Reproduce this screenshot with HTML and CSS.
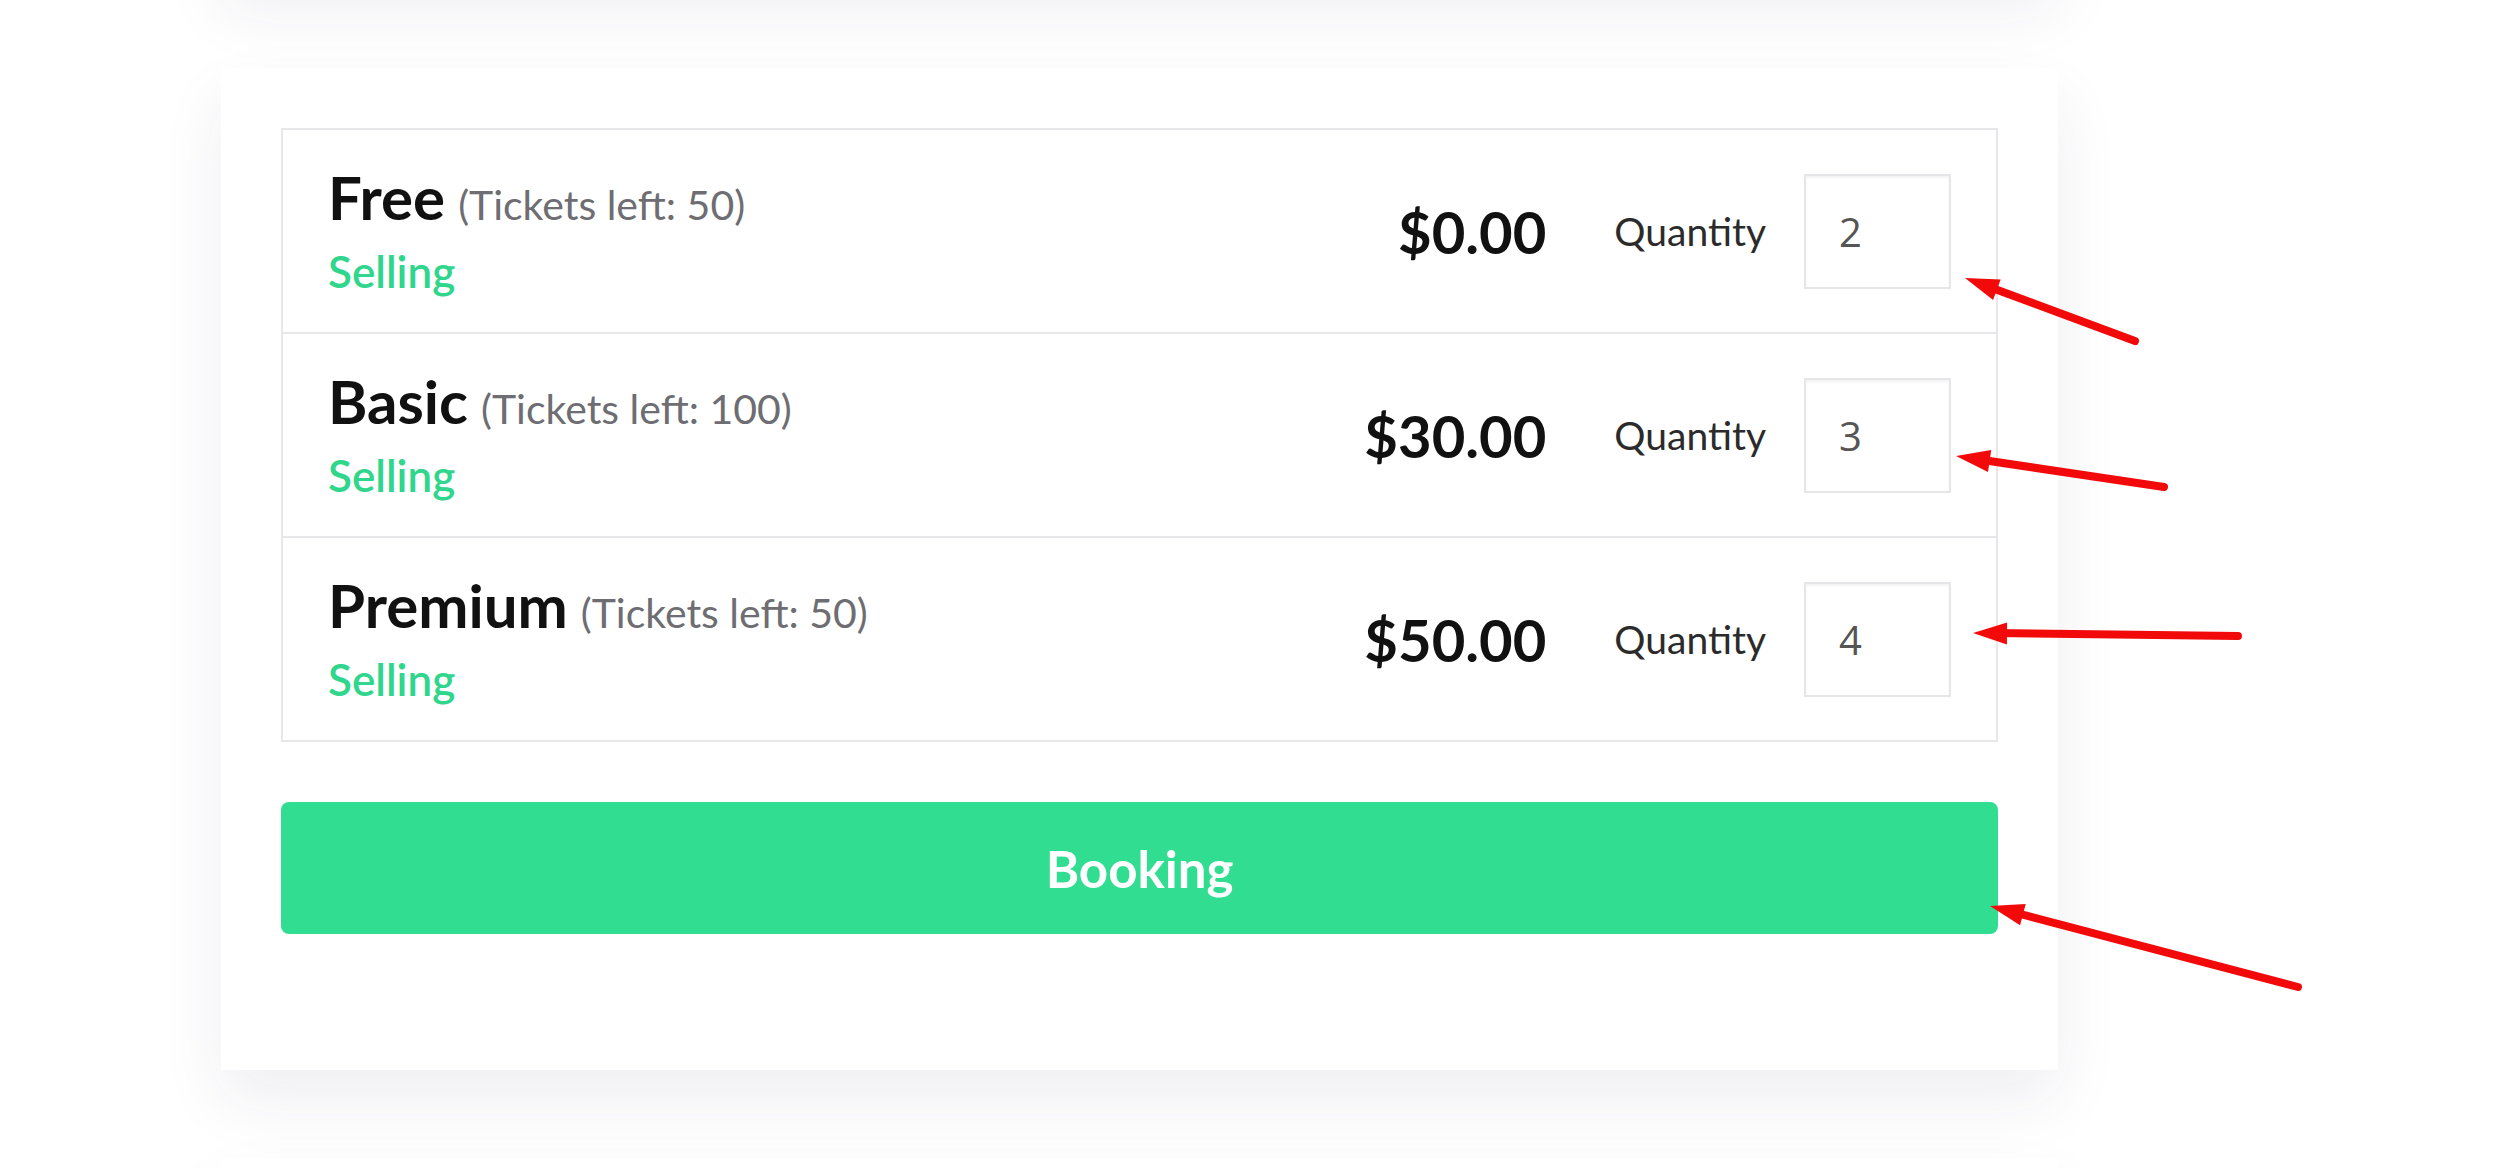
FILE: index.html
```html
<!DOCTYPE html>
<html lang="en">
<head>
<meta charset="utf-8">
<title>Tickets</title>
<link rel="stylesheet" href="styles.css">
</head>
<body>
<div class="page">
  <div class="card card-prev"></div>
  <div class="card booking-card">
    <div class="tickets">
      <div class="ticket-row">
        <div class="ticket-info">
          <div class="ticket-title"><span class="ticket-name">Free</span><span class="ticket-left">(Tickets left: 50)</span></div>
          <div class="ticket-status">Selling</div>
        </div>
        <div class="ticket-price">$0.00</div>
        <label class="qty-label">Quantity</label>
        <input class="qty-input" type="text" value="2">
      </div>
      <div class="ticket-row">
        <div class="ticket-info">
          <div class="ticket-title"><span class="ticket-name">Basic</span><span class="ticket-left">(Tickets left: 100)</span></div>
          <div class="ticket-status">Selling</div>
        </div>
        <div class="ticket-price">$30.00</div>
        <label class="qty-label">Quantity</label>
        <input class="qty-input" type="text" value="3">
      </div>
      <div class="ticket-row">
        <div class="ticket-info">
          <div class="ticket-title"><span class="ticket-name">Premium</span><span class="ticket-left">(Tickets left: 50)</span></div>
          <div class="ticket-status">Selling</div>
        </div>
        <div class="ticket-price">$50.00</div>
        <label class="qty-label">Quantity</label>
        <input class="qty-input" type="text" value="4">
      </div>
    </div>
    <button class="booking-btn" type="button">Booking</button>
  </div>
  <div class="card card-next"></div>
</div>

<svg class="annotations" width="2500" height="1168" viewBox="0 0 2500 1168" xmlns="http://www.w3.org/2000/svg">
  <g stroke="#f20a0a" stroke-width="8" stroke-linecap="round" fill="none">
    <line x1="1984" y1="285" x2="2135" y2="341"/>
    <line x1="1976" y1="459" x2="2164" y2="487"/>
    <line x1="1993" y1="633" x2="2238" y2="636"/>
    <line x1="2009" y1="911" x2="2298" y2="987"/>
  </g>
  <g fill="#f20a0a">
    <polygon points="1965,278 2000.7,279.5 1993.1,300.1"/>
    <polygon points="1956,456 1991.2,450.1 1988,471.9"/>
    <polygon points="1973,633 2007.1,622.4 2006.9,644.4"/>
    <polygon points="1990,906 2025.7,904 2020.1,925.2"/>
  </g>
</svg>
</body>
</html>
```

FILE: styles.css
```css
html, body {
  margin: 0;
  padding: 0;
}

body {
  width: 2500px;
  height: 1168px;
  overflow: hidden;
  position: relative;
  background: #ffffff;
  font-family: Lato, "Open Sans", "Liberation Sans", sans-serif;
  color: #111111;
}

.page {
  width: 1837px;
  margin: -220px 0 0 221px;
  display: flex;
  flex-direction: column;
  gap: 88px;
}

.card {
  background: #ffffff;
  box-shadow: 0 30px 60px rgba(40, 40, 90, 0.075);
}

.card-prev {
  height: 200px;
}

.card-next {
  height: 300px;
}

.booking-card {
  padding: 60px 60px 136px 60px;
  display: flex;
  flex-direction: column;
  gap: 60px;
}

.tickets {
  border: 2px solid #e7e7ea;
  display: flex;
  flex-direction: column;
}

.ticket-row {
  height: 202px;
  display: flex;
  align-items: center;
  padding: 0 45px 0 45px;
}

.ticket-row + .ticket-row {
  border-top: 2px solid #e7e7ea;
}

.ticket-info {
  flex: 1;
  display: flex;
  flex-direction: column;
  gap: 8px;
}

.ticket-title {
  display: flex;
  align-items: baseline;
  gap: 13px;
  line-height: 64px;
  white-space: nowrap;
}

.ticket-name {
  font-size: 60px;
  font-weight: 700;
  color: #111111;
}

.ticket-left {
  font-size: 41px;
  font-weight: 400;
  color: #6d6d72;
}

.ticket-status {
  font-size: 44px;
  line-height: 52px;
  font-weight: 600;
  color: #30d68c;
}

.ticket-price {
  font-size: 58px;
  font-weight: 700;
  color: #111111;
  margin-right: 68px;
}

.qty-label {
  font-size: 39px;
  font-weight: 400;
  color: #2b2b2b;
  margin-right: 38px;
}

.qty-input {
  box-sizing: border-box;
  width: 147px;
  height: 115px;
  border: 2px solid #e6e6e8;
  box-shadow: inset 0 2px 3px rgba(0, 0, 0, 0.05);
  border-radius: 0;
  padding: 0 0 0 33px;
  font-family: "Open Sans", Lato, sans-serif;
  font-size: 40px;
  color: #555555;
  background: #ffffff;
  outline: none;
}

.booking-btn {
  height: 132px;
  border: none;
  border-radius: 8px;
  background: #31dd91;
  color: #ffffff;
  font-family: Lato, "Open Sans", sans-serif;
  font-size: 51px;
  font-weight: 700;
  cursor: pointer;
}

.annotations {
  position: absolute;
  top: 0;
  left: 0;
  pointer-events: none;
}
```
